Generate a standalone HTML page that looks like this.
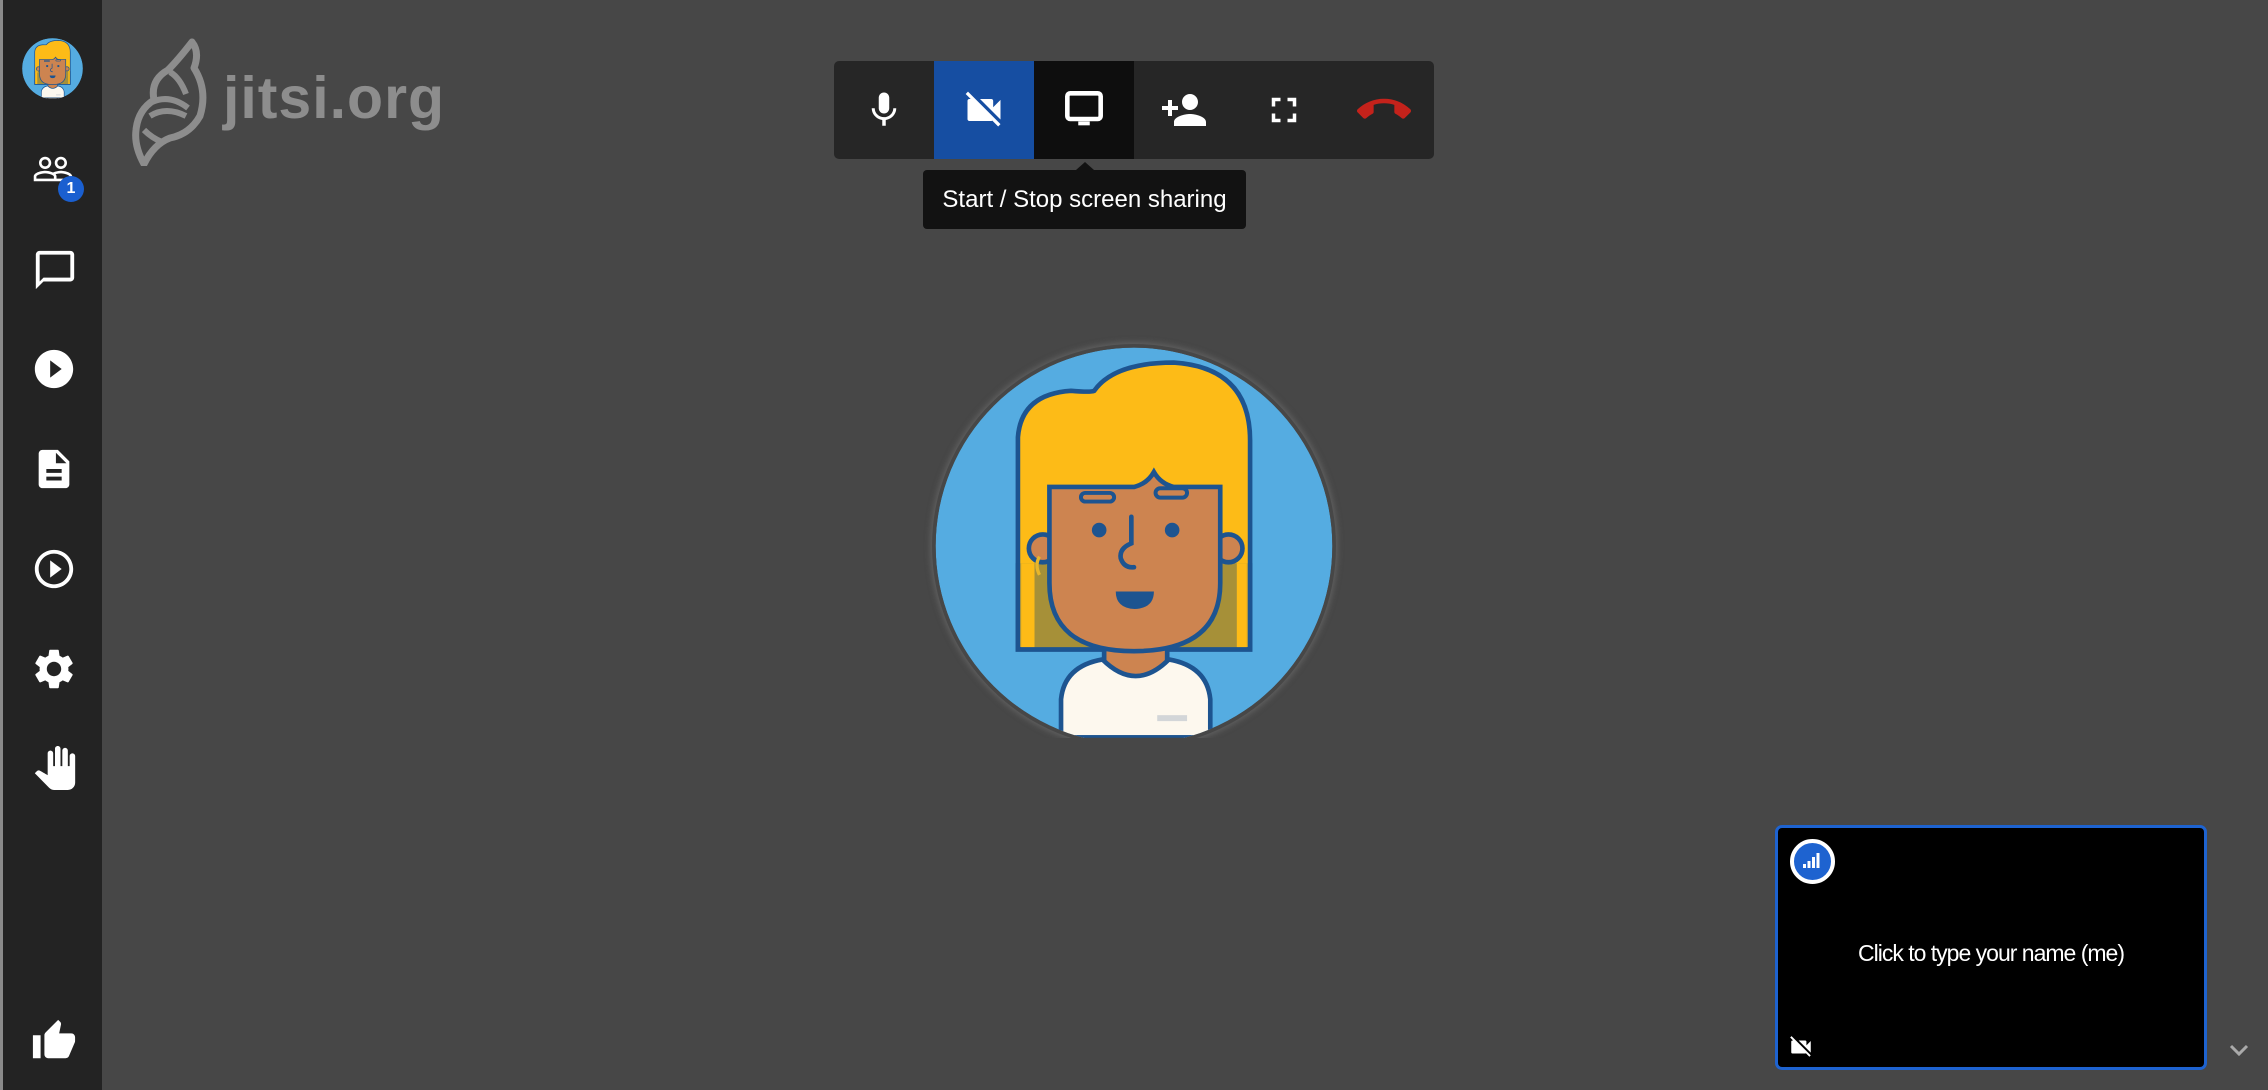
<!DOCTYPE html>
<html><head><meta charset="utf-8"><style>
html,body{margin:0;padding:0;width:2268px;height:1090px;overflow:hidden;background:#474747;font-family:"Liberation Sans",sans-serif}
.side{position:absolute;left:0;top:0;width:102px;height:1090px;background:#232323;border-left:3px solid #8a8a8a;box-sizing:border-box}
.ic{position:absolute;fill:#fff}
.tb{position:absolute;left:834px;top:61px;width:600px;height:98px;background:#262626;border-radius:5px;overflow:hidden}
.btn{position:absolute;top:0;width:100px;height:98px;display:flex;align-items:center;justify-content:center}
.tip{position:absolute;left:923px;top:170px;width:323px;height:59px;background:#121212;border-radius:4px;color:#fff;font-size:24px;display:flex;align-items:center;justify-content:center;white-space:nowrap}
.tip:before{content:"";position:absolute;left:153px;top:-8px;border-left:9px solid transparent;border-right:9px solid transparent;border-bottom:8px solid #121212}
.thumb{position:absolute;left:1775px;top:825px;width:432px;height:245px;box-sizing:border-box;border:3px solid #1e63d0;border-radius:7px;background:#000}
</style></head><body>
<svg width="0" height="0" style="position:absolute">
<defs>
<clipPath id="cc"><circle cx="640" cy="648" r="598"/></clipPath>
<symbol id="av" viewBox="40 48 1200 1200">
<g clip-path="url(#cc)">
<circle cx="640" cy="648" r="598" fill="#55ace1"/>
<path d="M290 960 L290 320 Q300 190 450 180 Q510 185 520 180 Q580 95 760 95 Q990 110 990 330 L990 960 Z" fill="#fdbb17" stroke="#1d5490" stroke-width="14"/>
<rect x="300" y="700" width="680" height="255" fill="#a69038"/>
<rect x="300" y="700" width="40" height="255" fill="#fdbb17"/>
<rect x="950" y="700" width="30" height="255" fill="#fdbb17"/>
<path d="M290 700 L290 960 L990 960 L990 700" fill="none" stroke="#1d5490" stroke-width="14"/>
<circle cx="365" cy="655" r="42" fill="#cd8450" stroke="#1d5490" stroke-width="14"/>
<circle cx="925" cy="655" r="42" fill="#cd8450" stroke="#1d5490" stroke-width="14"/>
<path d="M550 940 L550 1080 L740 1080 L740 940 Z" fill="#cd8450" stroke="#1d5490" stroke-width="14"/>
<path d="M420 1260 L420 1110 Q430 1010 545 990 Q645 1090 745 990 Q860 1010 870 1110 L870 1260 Z" fill="#fdf8ee" stroke="#1d5490" stroke-width="14"/>
<rect x="710" y="1158" width="90" height="18" fill="#d3d6d8"/>
<path d="M385 470 L640 470 Q680 460 700 425 Q720 460 760 470 L900 470 L900 760 Q900 965 640 965 Q385 965 385 760 Z" fill="#cd8450" stroke="#1d5490" stroke-width="14"/>
<rect x="480" y="488" width="100" height="26" rx="13" fill="none" stroke="#1d5490" stroke-width="12"/>
<rect x="705" y="474" width="95" height="28" rx="14" fill="none" stroke="#1d5490" stroke-width="12"/>
<circle cx="535" cy="600" r="22" fill="#1d5490"/><circle cx="755" cy="600" r="22" fill="#1d5490"/>
<path d="M632 560 L632 640 Q595 655 600 685 Q610 715 640 712" fill="none" stroke="#1d5490" stroke-width="14" stroke-linecap="round"/>
<path d="M585 785 L700 785 Q700 835 642 838 Q585 835 585 785 Z" fill="#1d5490"/>
<path d="M355 680 Q340 705 355 735" fill="none" stroke="#e8b62a" stroke-width="10"/>
<rect x="0" y="1220" width="1300" height="100" fill="#474747"/>
<rect x="380" y="1218" width="520" height="8" fill="#1d5490"/>
</g>
</symbol>
</defs></svg>

<div class="side">
<svg style="position:absolute;left:19px;top:38px" width="61" height="61"><use href="#av" width="61" height="61"/></svg>
<svg class="ic" style="left:29px;top:148px" width="42" height="42" viewBox="0 0 24 24"><path d="M16.5 13c-1.2 0-3.07.34-4.5 1-1.43-.67-3.3-1-4.5-1C5.33 13 1 14.08 1 16.25V19h22v-2.750c0-2.17-4.33-3.25-6.5-3.25zm-4 4.5h-10v-1.25c0-.54 2.56-1.75 5-1.75s5 1.21 5 1.75v1.25zm9 0H14v-1.25c0-.46-.2-.86-.52-1.22.88-.3 1.96-.53 3.020-.53 2.44 0 5 1.21 5 1.75v1.25zM7.5 12c1.93 0 3.5-1.57 3.5-3.5S9.43 5 7.5 5 4 6.57 4 8.5 5.57 12 7.5 12zm0-5.5c1.1 0 2 .9 2 2s-.9 2-2 2-2-.9-2-2 .9-2 2-2zm9 5.5c1.93 0 3.5-1.57 3.5-3.5S18.43 5 16.5 5 13 6.57 13 8.5s1.57 3.5 3.5 3.5zm0-5.5c1.1 0 2 .9 2 2s-.9 2-2 2-2-.9-2-2 .9-2 2-2z"/></svg>
<div style="position:absolute;left:55px;top:176px;width:26px;height:26px;border-radius:50%;background:#1a5fd0;color:#fff;font-size:16px;font-weight:bold;text-align:center;line-height:26px">1</div>
<svg class="ic" style="left:29px;top:247px" width="46" height="46" viewBox="0 0 24 24"><path d="M20 2H4c-1.1 0-2 .9-2 2v18l4-4h14c1.1 0 2-.9 2-2V4c0-1.1-.9-2-2-2zm0 14H6l-2 2V4h16v12z"/></svg>
<svg class="ic" style="left:28px;top:346px" width="46" height="46" viewBox="0 0 24 24"><path d="M12 2C6.48 2 2 6.48 2 12s4.48 10 10 10 10-4.48 10-10S17.52 2 12 2zm-2 14.5v-9l6 4.5-6 4.5z"/></svg>
<svg class="ic" style="left:28px;top:446px" width="46" height="46" viewBox="0 0 24 24"><path d="M14 2H6c-1.1 0-1.99.9-1.99 2L4 20c0 1.1.89 2 1.99 2H18c1.1 0 2-.9 2-2V8l-6-6zm2 16H8v-2h8v2zm0-4H8v-2h8v2zm-3-5V3.5L18.5 9H13z"/></svg>
<svg class="ic" style="left:28px;top:546px" width="46" height="46" viewBox="0 0 24 24"><path d="M10 16.5l6-4.5-6-4.5v9zM12 2C6.48 2 2 6.48 2 12s4.48 10 10 10 10-4.48 10-10S17.52 2 12 2zm0 18c-4.41 0-8-3.59-8-8s3.59-8 8-8 8 3.59 8 8-3.59 8-8 8z"/></svg>
<svg class="ic" style="left:27px;top:645px" width="48" height="48" viewBox="0 0 24 24"><path d="M19.14 12.94c.04-.3.06-.61.06-.94 0-.32-.02-.64-.07-.94l2.03-1.58c.18-.14.23-.41.12-.61l-1.92-3.32c-.12-.22-.37-.29-.59-.22l-2.39.96c-.5-.38-1.03-.7-1.62-.94l-.36-2.54c-.04-.24-.24-.41-.48-.41h-3.84c-.24 0-.43.17-.47.41l-.36 2.54c-.59.24-1.13.57-1.62.94l-2.39-.96c-.22-.08-.47 0-.59.22L2.74 8.87c-.12.21-.08.47.12.61l2.03 1.58c-.05.3-.09.63-.09.94s.02.64.07.94l-2.03 1.58c-.18.14-.23.41-.12.61l1.92 3.32c.12.22.37.29.59.22l2.39-.96c.5.38 1.03.7 1.62.94l.36 2.54c.05.24.24.41.48.41h3.84c.24 0 .44-.17.47-.41l.36-2.54c.59-.24 1.13-.56 1.62-.94l2.39.96c.22.08.47 0 .59-.22l1.92-3.32c.12-.22.07-.47-.12-.61l-2.01-1.58zM12 15.6c-1.98 0-3.6-1.62-3.6-3.6s1.62-3.6 3.6-3.6 3.6 1.62 3.6 3.6-1.62 3.6-3.6 3.6z"/></svg>
<svg class="ic" style="left:30px;top:746px" width="44" height="44" viewBox="0 0 24 24"><path d="M23 5.5V20c0 2.2-1.8 4-4 4h-7.3c-1.08 0-2.1-.43-2.85-1.19L1 14.83s1.26-1.23 1.3-1.25c.22-.19.49-.29.79-.29.22 0 .42.06.6.16.04.01 4.31 2.46 4.31 2.46V4c0-.83.67-1.5 1.5-1.5S11 3.17 11 4v7h1V1.5c0-.83.67-1.5 1.5-1.5S15 .67 15 1.5V11h1V2.5c0-.83.67-1.5 1.5-1.5s1.5.67 1.5 1.5V11h1V5.5c0-.83.67-1.5 1.5-1.5s1.5.67 1.5 1.5z"/></svg>
<svg class="ic" style="left:28px;top:1018px" width="46" height="46" viewBox="0 0 24 24"><path d="M1 21h4V9H1v12zm22-11c0-1.1-.9-2-2-2h-6.31l.95-4.57.03-.32c0-.41-.17-.79-.44-1.06L14.17 1 7.59 7.59C7.22 7.95 7 8.45 7 9v10c0 1.1.9 2 2 2h9c.83 0 1.54-.5 1.84-1.22l3.02-7.05c.09-.23.14-.47.14-.73v-2z"/></svg>
</div>

<!-- logo -->
<svg style="position:absolute;left:130px;top:38px" width="90" height="128" viewBox="0 0 90 128">
<path d="M62 4 Q70 14 64 30 Q78 52 70 78 Q60 96 40 100 Q24 106 14 126 Q4 108 6 92 Q8 72 24 62 Q20 42 38 32 Q48 22 62 4 Z" fill="none" stroke="#8d8d8d" stroke-width="7" stroke-linejoin="round"/>
<path d="M22 64 Q40 56 58 70 M20 78 Q36 68 56 78 M40 34 Q50 40 56 56 M14 92 Q22 100 32 104" fill="none" stroke="#8d8d8d" stroke-width="6"/>
</svg>
<div style="position:absolute;left:223px;top:64px;font-size:59px;font-weight:bold;color:#8d8d8d;letter-spacing:1px">jitsi.org</div>

<div class="tb">
<div class="btn" style="left:0"><svg class="ic" style="position:static" width="42" height="42" viewBox="0 0 24 24"><path d="M12 14c1.66 0 2.99-1.34 2.99-3L15 5c0-1.66-1.34-3-3-3S9 3.34 9 5v6c0 1.66 1.34 3 3 3zm5.3-3c0 3-2.54 5.1-5.3 5.1S6.7 14 6.7 11H5c0 3.41 2.72 6.23 6 6.72V21h2v-3.28c3.28-.48 6-3.3 6-6.72h-1.7z"/></svg></div>
<div class="btn" style="left:100px;background:#164ea2"><svg class="ic" style="position:static" width="44" height="44" viewBox="0 0 24 24"><path d="M21 6.5l-4 4V7c0-.55-.45-1-1-1H9.82L21 17.18V6.5zM3.27 2L2 3.27 4.73 6H4c-.55 0-1 .45-1 1v10c0 .55.45 1 1 1h12c.21 0 .39-.08.54-.18L19.73 21 21 19.73 3.27 2z"/></svg></div>
<div class="btn" style="left:200px;background:#0e0e0e"><svg style="position:static" width="46" height="46" viewBox="0 0 24 24"><rect x="3.3" y="3.3" width="17.4" height="13.4" rx="1.5" fill="none" stroke="#fff" stroke-width="2.4"/><rect x="9" y="18" width="6" height="2" fill="#fff"/></svg></div>
<div class="btn" style="left:300px"><svg class="ic" style="position:static" width="48" height="48" viewBox="0 0 24 24"><path d="M15 12c2.21 0 4-1.79 4-4s-1.79-4-4-4-4 1.79-4 4 1.79 4 4 4zm-9-2V7H4v3H1v2h3v3h2v-3h3v-2H6zm9 4c-2.67 0-8 1.34-8 4v2h16v-2c0-2.66-5.33-4-8-4z"/></svg></div>
<div class="btn" style="left:400px"><svg class="ic" style="position:static" width="42" height="42" viewBox="0 0 24 24"><path d="M7 14H5v5h5v-2H7v-3zm-2-4h2V7h3V5H5v5zm12 7h-3v2h5v-5h-2v3zM14 5v2h3v3h2V5h-5z"/></svg></div>
<div class="btn" style="left:500px"><svg style="position:static;fill:#c4221b" width="54" height="54" viewBox="0 0 24 24"><path d="M12 9c-1.6 0-3.15.25-4.6.72v3.1c0 .39-.23.74-.56.9-.98.49-1.87 1.12-2.66 1.85-.18.18-.43.28-.7.28-.28 0-.53-.11-.71-.29L.29 13.08c-.18-.17-.29-.42-.29-.7 0-.28.11-.53.29-.71C3.34 8.78 7.46 7 12 7s8.66 1.78 11.71 4.670c.18.18.29.43.29.71 0 .28-.11.53-.29.71l-2.48 2.48c-.18.18-.43.29-.71.29-.27 0-.52-.11-.7-.28-.79-.74-1.69-1.36-2.67-1.85-.33-.16-.56-.5-.56-.9v-3.1C15.15 9.25 13.6 9 12 9z"/></svg></div>
</div>
<div class="tip">Start / Stop screen sharing</div>

<div style="position:absolute;left:932px;top:344px;width:404px;height:404px;border-radius:50%;box-shadow:0 0 6px 2px rgba(120,120,120,.5)"></div>
<svg style="position:absolute;left:935px;top:347px" width="398" height="398"><use href="#av" width="398" height="398"/></svg>
<div style="position:absolute;left:900px;top:738px;width:460px;height:20px;background:#474747"></div>

<div class="thumb">
<div style="position:absolute;left:12px;top:11px;width:37px;height:37px;border-radius:50%;border:4px solid #fff;background:#1e63d0"></div>
<svg style="position:absolute;left:25px;top:24px" width="20" height="16" viewBox="0 0 20 16" fill="#fff"><rect x="0" y="12" width="3" height="4"/><rect x="4.5" y="9" width="3" height="7"/><rect x="9" y="5" width="3" height="11"/><rect x="13.5" y="1" width="3" height="15"/></svg>
<div style="position:absolute;left:0;right:0;top:112px;text-align:center;color:#fff;font-size:23px;letter-spacing:-1px">Click to type your name (me)</div>
<svg class="ic" style="left:10px;top:206px" width="26" height="26" viewBox="0 0 24 24"><path d="M21 6.5l-4 4V7c0-.55-.45-1-1-1H9.82L21 17.18V6.5zM3.27 2L2 3.27 4.73 6H4c-.55 0-1 .45-1 1v10c0 .55.45 1 1 1h12c.21 0 .39-.08.54-.18L19.73 21 21 19.73 3.27 2z"/></svg>
</div>
<svg style="position:absolute;left:2229px;top:1043px" width="20" height="14" viewBox="0 0 20 14"><path d="M2 3 L10 11 L18 3" fill="none" stroke="#aaa" stroke-width="3"/></svg>
</body></html>
